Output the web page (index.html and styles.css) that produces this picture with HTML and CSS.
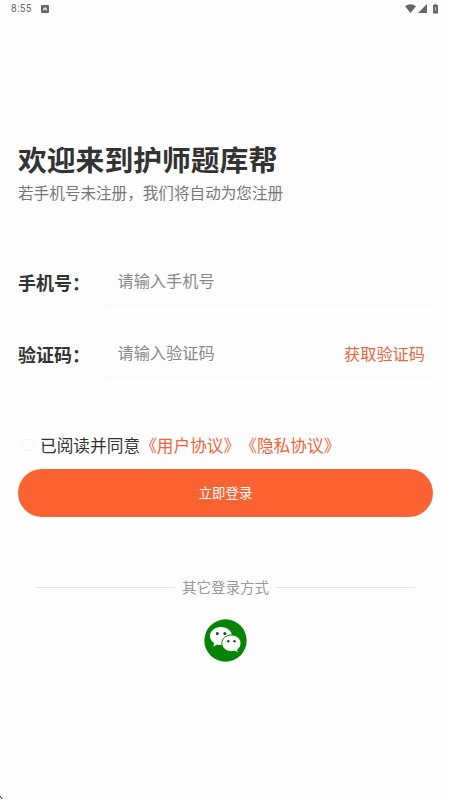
FILE: index.html
```html
<!DOCTYPE html>
<html lang="zh-CN">
<head>
<meta charset="utf-8">
<title>登录</title>
<link rel="stylesheet" href="styles.css">
</head>
<body>
<header class="status">
  <span class="time">8:55</span>
  <svg class="app" width="8" height="8" viewBox="0 0 8 8"><rect width="8" height="8" rx="1" fill="#666"/><path d="M2 6V3.500L4 2l2 1.500V6L4 4.500z" fill="#ddd"/></svg>
  <svg class="signals" width="36" height="12" viewBox="0 0 36 12"><path d="M0 3.200Q5.500-.6 11 3.200L5.500 10z" fill="#666"/><path d="M22 1v9h-9z" fill="#666"/><path d="M29.500 1h2v1h1.500v8.500h-5V2h1.500z" fill="#666"/><path d="M30.500 4v4" stroke="#bbb"/></svg>
</header>
<main class="page">
  <h1 class="title">欢迎来到护师题库帮</h1>
  <p class="subtitle">若手机号未注册，我们将自动为您注册</p>
  <form class="form">
    <div class="row">
      <label class="label">手机号：</label>
      <div class="field"><span class="hint">请输入手机号</span></div>
    </div>
    <div class="row">
      <label class="label">验证码：</label>
      <div class="field"><span class="hint">请输入验证码</span><a class="code">获取验证码</a></div>
    </div>
    <div class="agree"><span class="box"></span><span>已阅读并同意</span><a class="link">《用户协议》</a><a class="link">《隐私协议》</a></div>
    <button class="submit" type="button">立即登录</button>
  </form>
  <div class="divider"><span class="divider-text">其它登录方式</span></div>
  <svg class="wechat" width="43" height="43" viewBox="0 0 43 43">
    <circle cx="21.500" cy="21.500" r="21.200" fill="#078407"/>
    <path d="M17 8C10.800 8 6 12 6 17c0 3 1.600 5.500 4.200 7.100L9.300 27.500l4-2.100c1.200.4 2.400.6 3.700.6 6.200 0 11-4 11-9s-4.800-9-11-9z" fill="#fff"/>
    <path d="M27.500 16c-5.500 0-9.700 3.700-9.700 8.300s4.200 8.300 9.700 8.300c1.200 0 2.300-.2 3.300-.5l3.600 2-.9-3.200c2.200-1.500 3.500-3.900 3.500-6.600 0-4.600-4.100-8.300-9.500-8.300z" fill="#fff" stroke="#078407"/>
    <g fill="#174f17"><circle cx="13.300" cy="14.400" r="1.500"/><circle cx="20.800" cy="14.400" r="1.500"/><circle cx="24.300" cy="22.300" r="1.200"/><circle cx="30.500" cy="22.300" r="1.200"/></g>
  </svg>
</main>
<svg class="corner" width="3" height="5" viewBox="0 0 3 5"><path d="M0 1l2 3" stroke="#333" fill="none"/></svg>
</body>
</html>
```
FILE: styles.css
```css
* { box-sizing: border-box; }
body {
  margin: 0;
  height: 800px;
  overflow: hidden;
  position: relative;
  background: #fefefe;
  color: #333;
  font-family: "Noto Sans CJK SC", sans-serif;
}
.status { display: flex; align-items: center; height: 18px; padding: 0 9px 0 11px; }
.time { font: 10px/18px Roboto, sans-serif; color: #666; letter-spacing: .4px; }
.app { margin-left: 9px; }
.signals { margin-left: auto; }
.page { padding: 121px 17px 0 18px; }
.title { margin: 0; font-size: 28.8px; line-height: 40px; font-weight: 700; }
.subtitle { margin: 1px 0 0; font-size: 15.6px; line-height: 24px; color: #777; }
.form { margin-top: 54px; }
.row { display: flex; height: 48px; margin-bottom: 24px; }
.label { width: 87px; font-size: 18px; line-height: 48px; font-weight: 700; white-space: nowrap; }
.field {
  flex: 1;
  display: flex;
  justify-content: space-between;
  padding: 0 8px 0 12.5px;
  border-bottom: 1px solid #f7f7f7;
  font-size: 16.2px;
  line-height: 44px;
}
.hint { color: #888; }
.code { color: #f26338; line-height: 47px; }
.agree { display: flex; align-items: center; height: 24px; margin-top: 55px; padding-left: 4px; font-size: 16.7px; }
.box { width: 12px; height: 12px; margin-right: 6px; border: 1px solid #f6f6f6; }
.link { color: #f26338; }
.submit {
  display: block;
  width: 100%;
  height: 48px;
  margin-top: 12px;
  padding: 0 0 2px;
  border: 0;
  border-radius: 24px;
  background: #fc6332;
  color: #fff;
  font: 13.4px/46px "Noto Sans CJK SC", sans-serif;
}
.divider {
  display: flex;
  align-items: center;
  gap: 7px;
  height: 24px;
  margin: 58px 18px 0;
  font-size: 14.5px;
  color: #999;
}
.divider::before, .divider::after { content: ""; flex: 1; height: 1px; background: #e6e6e6; }
.divider-text { padding-bottom: 1px; }
.wechat { display: block; margin: 20px auto 0; }
.corner { position: absolute; left: 0; bottom: 0; }
```
